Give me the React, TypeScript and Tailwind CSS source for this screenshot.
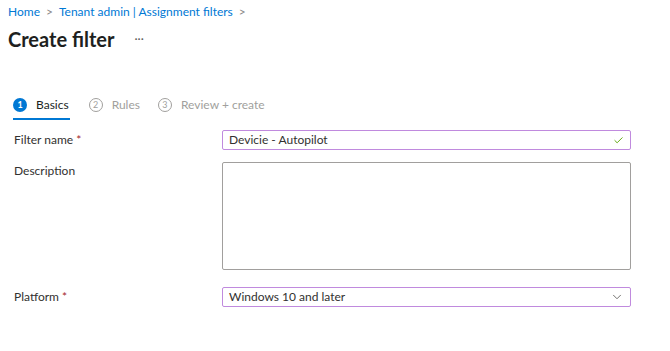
import { Check, ChevronDown } from "lucide-react";

function StepCircle({ n, active }: { n: number; active?: boolean }) {
  return (
    <span
      className={
        active
          ? "flex h-[14px] w-[14px] items-center justify-center rounded-full bg-[#0078d4] text-[9px] font-bold text-white"
          : "flex h-[14px] w-[14px] items-center justify-center rounded-full border border-[#a19f9d] text-[9px] text-[#a19f9d]"
      }
    >
      {n}
    </span>
  );
}

function Label({ text, required }: { text: string; required?: boolean }) {
  return (
    <div className="text-[12px] text-[#323130]">
      {text}
      {required ? <span className="ml-[3px] text-[#a4262c]">*</span> : null}
    </div>
  );
}

export default function App() {
  return (
    <div className="h-[351px] w-[670px] overflow-hidden bg-white font-['Lato','Open_Sans',sans-serif]">
      <div className="flex items-center gap-[6px] pl-[8px] pt-[3px] text-[12px] text-[#0078d4]">
        <span>Home</span>
        <span className="text-[#8a8886]">&gt;</span>
        <span>Tenant admin | Assignment filters</span>
        <span className="text-[#8a8886]">&gt;</span>
      </div>

      <div className="mt-[3px] flex items-center pl-[8px]">
        <h1 className="text-[20px] font-bold text-[#201f1e]">Create filter</h1>
        <span className="ml-[20px] text-[12px] text-[#605e5c]">···</span>
      </div>

      <div className="ml-[13px] mt-[37px] flex items-center text-[12px]">
        <div className="flex items-center gap-[9px] border-b-2 border-[#0078d4] pb-[4px] pt-[5px] pr-[1px]">
          <StepCircle n={1} active />
          <span className="text-[#201f1e]">Basics</span>
        </div>
        <div className="ml-[19px] flex items-center gap-[9px] pb-[6px] pt-[5px]">
          <StepCircle n={2} />
          <span className="text-[#a19f9d]">Rules</span>
        </div>
        <div className="ml-[18px] flex items-center gap-[9px] pb-[6px] pt-[5px]">
          <StepCircle n={3} />
          <span className="text-[#a19f9d]">Review + create</span>
        </div>
      </div>

      <div className="mt-[10px] grid grid-cols-[208px_409px] gap-y-[12px] pl-[14px]">
        <div className="flex h-[20px] items-center">
          <Label text="Filter name" required />
        </div>
        <div className="flex h-[20px] items-center justify-between rounded-[2px] border border-[#c08ade] px-[6px] text-[12px] text-[#323130]">
          <span>Devicie - Autopilot</span>
          <Check className="h-[11px] w-[11px] text-[#57a300]" strokeWidth={2} />
        </div>

        <div>
          <Label text="Description" />
        </div>
        <div className="h-[108px] rounded-[2px] border border-[#a19f9d]" />

        <div className="mt-[5px] flex h-[20px] items-center">
          <Label text="Platform" required />
        </div>
        <div className="mt-[5px] flex h-[20px] items-center justify-between rounded-[2px] border border-[#c08ade] px-[6px] text-[12px] text-[#323130]">
          <span>Windows 10 and later</span>
          <ChevronDown className="h-[14px] w-[14px] text-[#605e5c]" strokeWidth={1.5} />
        </div>
      </div>
    </div>
  );
}
